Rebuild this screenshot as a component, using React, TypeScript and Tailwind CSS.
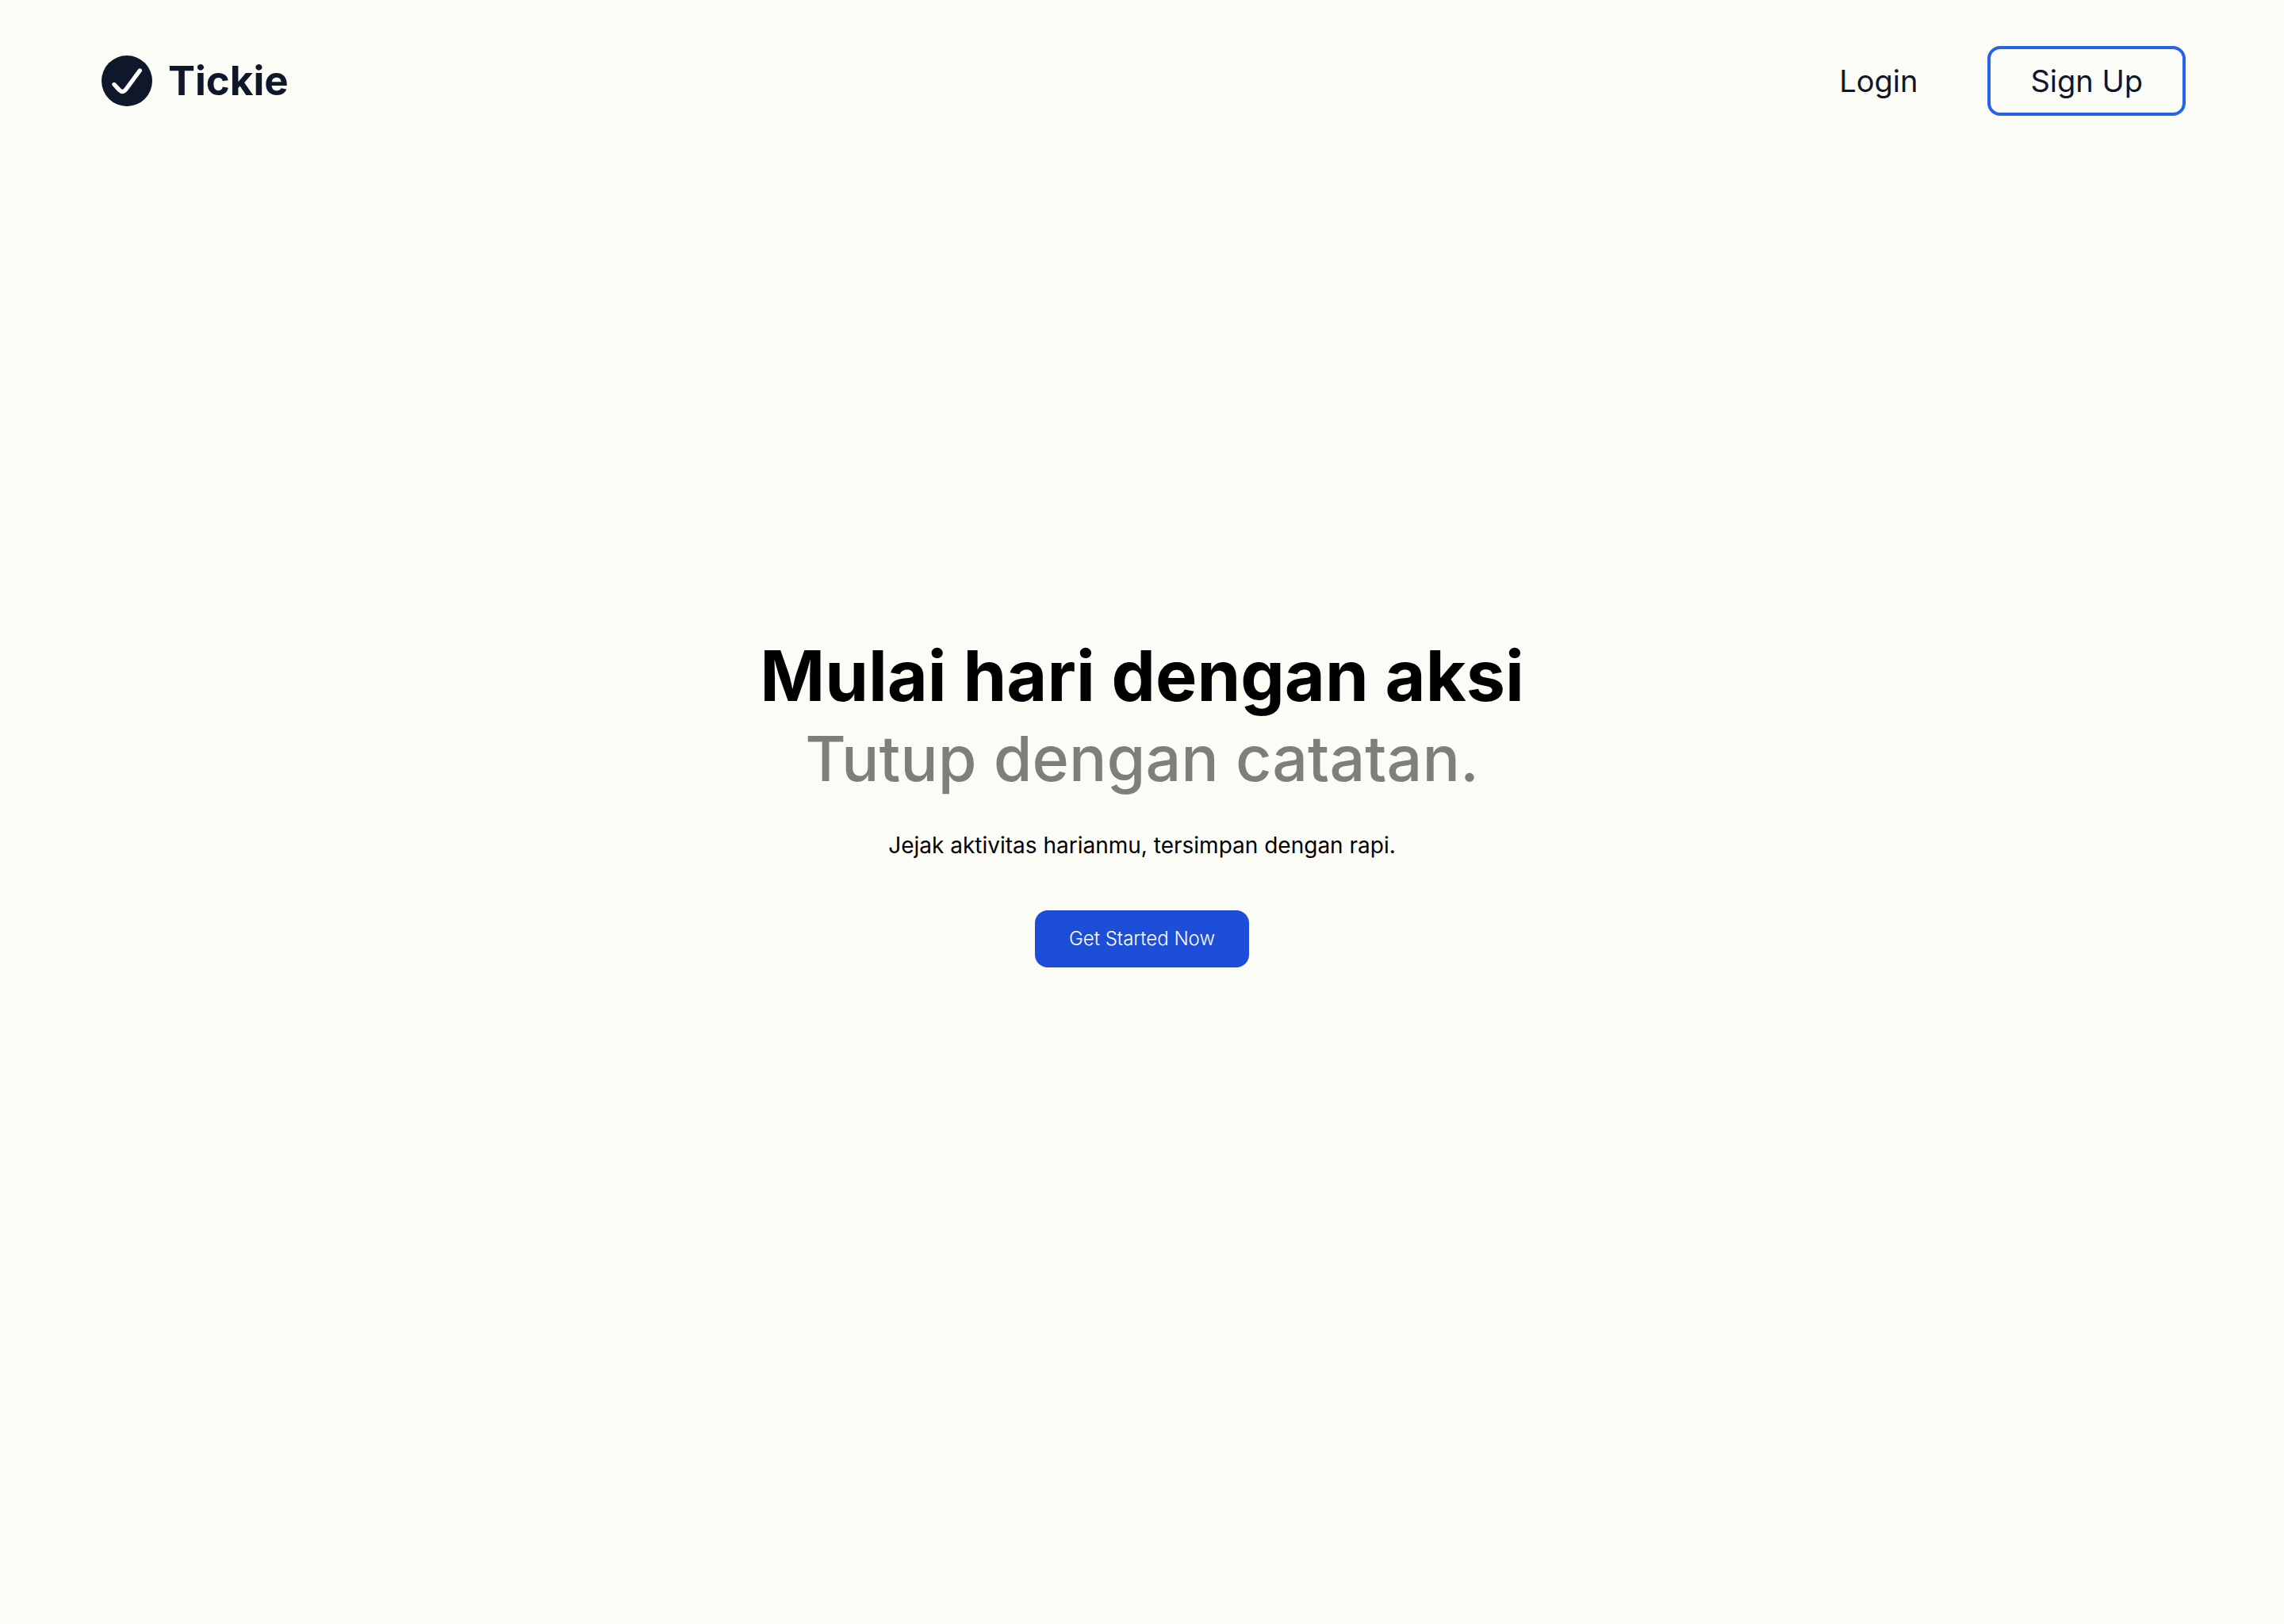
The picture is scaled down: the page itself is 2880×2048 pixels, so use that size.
function Logo() {
  return (
    <a href="#" className="flex items-center gap-5">
      <svg viewBox="0 0 64 64" className="size-16" aria-hidden="true">
        <circle cx="32" cy="32" r="32" fill="#0f172a" />
        <path
          d="M16 36.5 L22.6 43.6 Q27 47.8 30.6 43 L48.3 19"
          fill="none"
          stroke="#ffffff"
          strokeWidth="5.4"
          strokeLinecap="round"
          strokeLinejoin="round"
        />
      </svg>
      <span className="text-[51px] leading-[66px] font-bold">Tickie</span>
    </a>
  );
}

export default function App() {
  return (
    <div className="flex min-h-screen flex-col bg-[#fcfcf7] font-['Inter',sans-serif] text-[#0f172a]">
      <header className="flex items-center justify-between py-[58px] pr-[124px] pl-32">
        <Logo />
        <nav className="flex items-center gap-[88px] text-[38px] leading-[60px]">
          <a href="#login">Login</a>
          <button type="button" className="rounded-2xl border-4 border-[#2563eb] px-[50px] py-2.5">
            Sign Up
          </button>
        </nav>
      </header>
      <main className="flex flex-1 flex-col items-center pt-[600px] text-center text-black">
        <h1 className="text-[88px] leading-[96px] font-bold">Mulai hari dengan aksi</h1>
        <p className="text-[79px] leading-[112px] font-medium text-black/50">Tutup dengan catatan.</p>
        <p className="mt-[34px] text-[28px] leading-10">Jejak aktivitas harianmu, tersimpan dengan rapi.</p>
        <button type="button" className="mt-[62px] rounded-2xl bg-[#1d4ed8] px-[43px] py-4 text-2xl leading-10 font-light text-white">
          Get Started Now
        </button>
      </main>
    </div>
  );
}
